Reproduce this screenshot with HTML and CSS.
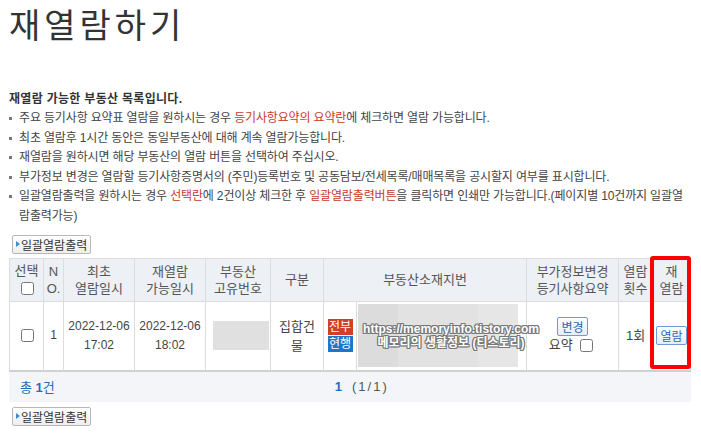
FILE: index.html
```html
<!DOCTYPE html>
<html lang="ko">
<head>
    <meta charset="UTF-8">
    <meta name="viewport" content="width=device-width, initial-scale=1.0">
    <title>재열람하기</title>
    <link rel="stylesheet" href="styles.css">
</head>
<body>
<div class="wrap">
    <h1 class="title">재열람하기</h1>

    <div class="notice">
        <p class="notice-head">재열람 가능한 부동산 목록입니다.</p>
        <ul class="notice-list">
            <li>주요 등기사항 요약표 열람을 원하시는 경우 <em>등기사항요약의 요약란</em>에 체크하면 열람 가능합니다.</li>
            <li>최초 열람후 1시간 동안은 동일부동산에 대해 계속 열람가능합니다.</li>
            <li>재열람을 원하시면 해당 부동산의 열람 버튼을 선택하여 주십시오.</li>
            <li>부가정보 변경은 열람할 등기사항증명서의 (주민)등록번호 및 공동담보/전세목록/매매목록을 공시할지 여부를 표시합니다.</li>
            <li>일괄열람출력을 원하시는 경우 <em>선택란</em>에 2건이상 체크한 후 <em>일괄열람출력버튼</em>을 클릭하면 인쇄만 가능합니다.(페이지별 10건까지 일괄열람출력가능)</li>
        </ul>
    </div>

    <button class="btn-print">일괄열람출력</button>

    <div class="board">
        <table class="list">
            <colgroup>
                <col style="width:34px">
                <col style="width:20px">
                <col style="width:71px">
                <col style="width:71px">
                <col style="width:65px">
                <col style="width:53px">
                <col style="width:33px">
                <col style="width:170px">
                <col style="width:92px">
                <col style="width:34px">
                <col style="width:38px">
            </colgroup>
            <thead>
                <tr>
                    <th>선택<br><input type="checkbox"></th>
                    <th>N<br>O.</th>
                    <th>최초<br>열람일시</th>
                    <th>재열람<br>가능일시</th>
                    <th>부동산<br>고유번호</th>
                    <th>구분</th>
                    <th colspan="2">부동산소재지번</th>
                    <th>부가정보변경<br>등기사항요약</th>
                    <th>열람<br>횟수</th>
                    <th>재<br>열람</th>
                </tr>
            </thead>
            <tbody>
                <tr>
                    <td><input type="checkbox"></td>
                    <td>1</td>
                    <td>2022-12-06<br>17:02</td>
                    <td>2022-12-06<br>18:02</td>
                    <td><div class="id-img"></div></td>
                    <td class="kind">집합건<br>물</td>
                    <td>
                        <span class="badge badge-all">전부</span>
                        <span class="badge badge-now">현행</span>
                    </td>
                    <td class="addr">
                        <div class="addr-img">
                            <div class="watermark">https://memoryinfo.tistory.com<br>메모리의 생활정보 (티스토리)</div>
                        </div>
                    </td>
                    <td>
                        <button class="btn-sm">변경</button><br>
                        <label class="sum">요약 <input type="checkbox"></label>
                    </td>
                    <td class="kind">1회</td>
                    <td><button class="btn-sm">열람</button></td>
                </tr>
            </tbody>
        </table>
        <div class="board-foot">
            <span class="total">총 <b>1</b>건</span>
            <span class="paging"><b>1</b><span class="pages">(1/1)</span></span>
        </div>
        <div class="highlight"></div>
    </div>

    <button class="btn-print btn-bottom">일괄열람출력</button>
</div>
</body>
</html>
```

FILE: styles.css
```css
body {
    margin: 0;
    font-family: "Liberation Sans", "Noto Sans CJK KR", sans-serif;
    font-size: 12px;
    color: #444;
    background: #fff;
}
.wrap {
    width: 682px;
    padding-left: 9px;
}
.title {
    margin: 0;
    font-family: "Noto Sans CJK KR", sans-serif;
    font-size: 34px;
    font-weight: 400;
    line-height: 48px;
    letter-spacing: 4px;
    color: #333;
}

/* notice */
.notice {
    margin-top: 41px;
}
.notice-head {
    margin: 0;
    font-weight: bold;
    line-height: 20px;
    letter-spacing: 0.3px;
    color: #333;
}
.notice-list {
    list-style: none;
    margin: 0;
    padding: 0;
}
.notice-list li {
    padding-left: 10px;
    line-height: 19.6px;
    letter-spacing: -0.15px;
    background: linear-gradient(#777, #777) no-repeat 0 8px / 3px 3px;
}
.notice-list em {
    font-style: normal;
    color: #c83a26;
}

/* buttons */
.btn-print {
    display: flex;
    align-items: center;
    gap: 1px;
    height: 19px;
    margin: 8px 0 4px 3px;
    padding: 0 3px;
    border: 1px solid #b8b8b8;
    border-radius: 2px;
    background: linear-gradient(#fff, #eee);
    font-family: "Liberation Sans", "Noto Sans CJK KR", sans-serif;
    font-size: 12px;
    color: #333;
}
.btn-print::before {
    content: "";
    border-left: 4px solid #3b8bd8;
    border-top: 3px solid transparent;
    border-bottom: 3px solid transparent;
}
.btn-bottom {
    margin-top: 5px;
}
.btn-sm {
    height: 19px;
    padding: 0 3px;
    border: 1px solid #6d9bd8;
    border-radius: 2px;
    background: linear-gradient(#fff, #e4edf9);
    font-family: "Liberation Sans", "Noto Sans CJK KR", sans-serif;
    font-size: 12px;
    color: #2b66b5;
    vertical-align: middle;
}

/* table */
.board {
    position: relative;
}
.list {
    width: 682px;
    border-collapse: collapse;
    table-layout: fixed;
}
.list th {
    height: 42px;
    padding: 0;
    background: #edf0f4;
    border: 1px solid #dcdcdc;
    font-weight: normal;
    font-size: 13px;
    line-height: 17px;
    color: #555;
}
.list td {
    height: 68px;
    padding: 0;
    border: 1px solid #dcdcdc;
    text-align: center;
    line-height: 19px;
}
.list td.kind {
    font-size: 13px;
}
.list tbody tr {
    border-bottom: 2px solid #d0d0d0;
}
.list input[type="checkbox"] {
    vertical-align: middle;
}
.id-img {
    width: 56px;
    height: 29px;
    margin-left: 7px;
    background: #e0e0e0;
}
.badge {
    display: block;
    width: 25px;
    height: 16px;
    margin: 1px auto;
    font-size: 12px;
    line-height: 16px;
    color: #fff;
}
.badge-all { background: #d13f29; }
.badge-now { background: #1a77cc; }
.list td.addr {
    text-align: left;
}
.addr-img {
    position: relative;
    width: 160px;
    height: 63px;
    margin-left: 1px;
    background: linear-gradient(90deg, #dcdcdc 0 40px, #e2e2e2 40px 120px, #e6e6e6 120px);
}
.watermark {
    position: absolute;
    left: 0;
    top: 18px;
    width: 186px;
    text-align: center;
    white-space: nowrap;
    font-weight: bold;
    font-size: 12px;
    line-height: 14px;
    color: #fff;
    text-shadow: -1px 0 #777, 1px 0 #777, 0 -1px #777, 0 1px #777,
                 1px 1px #777, -1px -1px #777, 1px -1px #777, -1px 1px #777;
}
.sum {
    display: inline-block;
    font-size: 13px;
    line-height: 17px;
}

/* footer */
.board-foot {
    display: flex;
    align-items: center;
    height: 30px;
    padding-left: 11px;
    background: #f4f5f8;
    font-size: 13px;
}
.total {
    color: #2b6cb8;
}
.paging {
    margin-left: 280px;
}
.paging b {
    color: #2b6cb8;
}
.pages {
    margin-left: 10px;
    letter-spacing: 2px;
    color: #555;
}
.highlight {
    position: absolute;
    left: 641px;
    top: -2px;
    width: 41px;
    height: 113px;
    box-sizing: border-box;
    border: 4px solid #f00;
    border-radius: 3px;
}
```
